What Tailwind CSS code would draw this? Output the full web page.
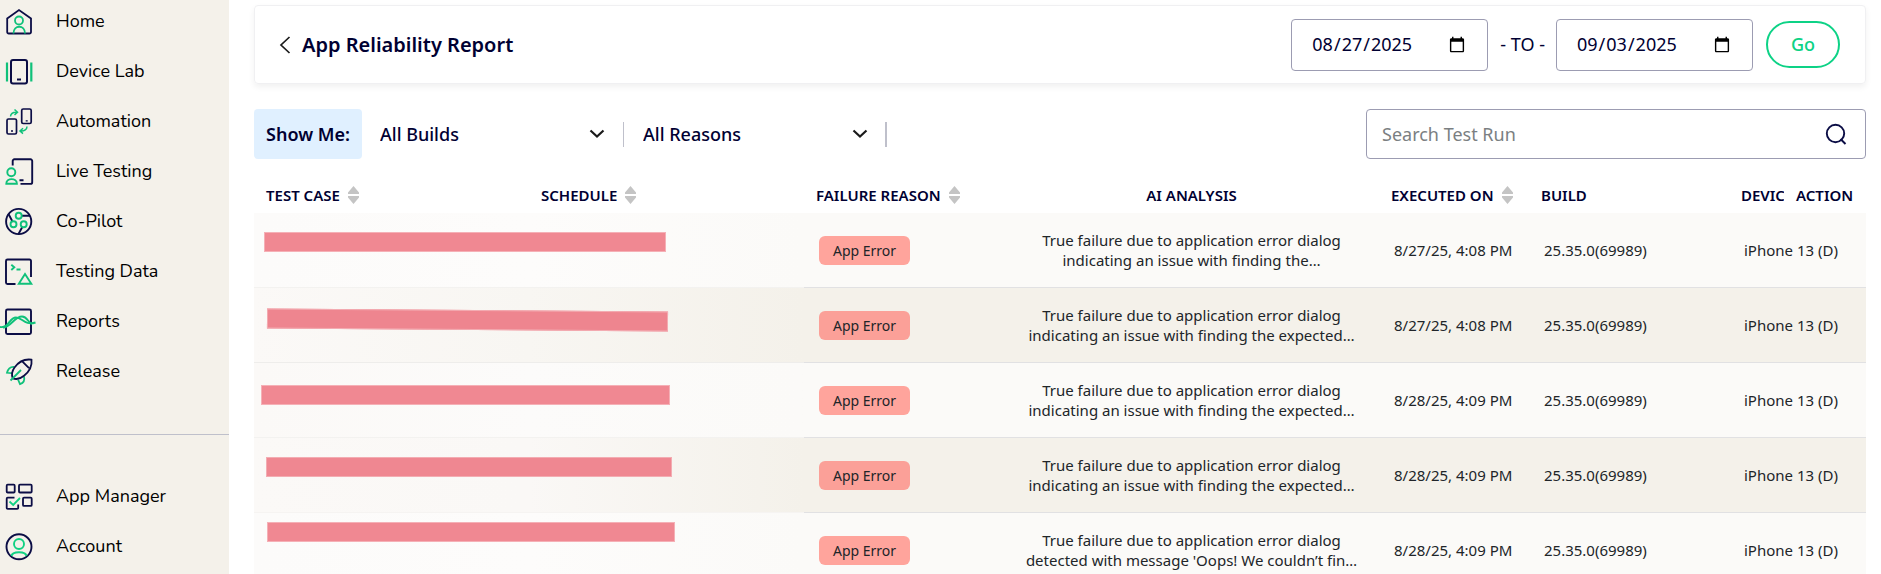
<!DOCTYPE html>
<html lang="en">
<head>
<meta charset="utf-8">
<title>App Reliability Report</title>
<script src="https://cdn.jsdelivr.net/npm/@tailwindcss/browser@4"></script>
</head>
<body class="flex h-screen overflow-hidden bg-white font-['Noto_Sans',sans-serif] text-[#000032]">

<svg class="hidden">
  <symbol id="sort" viewBox="0 0 11 18"><path d="M5.500 0 11 6.500V8H0V6.500Z M5.500 18 11 11.500V10H0v1.500Z" fill="#c4c4c4"/></symbol>
  <symbol id="chev" viewBox="0 0 16 10"><path d="M1.500 1.500 8 7.500 14.500 1.500" fill="none" stroke="#1a1a1a" stroke-width="2.200"/></symbol>
</svg>

<nav aria-label="Main" class="w-[229px] shrink-0 bg-[#f4f1ea] font-['Nunito','Lato',sans-serif] text-[18px] text-black">
  <ul class="flex flex-col gap-[6px] leading-[42px] [&_a]:flex [&_a]:h-11 [&_a]:items-start [&_a]:gap-5 [&_svg]:mt-1 [&_svg]:size-9">
    <li><a href="#">
      <svg viewBox="0 0 36 36" fill="none" stroke-width="1.800" stroke="#0b0d45"><path d="M7.200 14.500 19 6l12 8.500V28a1.500 1.500 0 0 1-1.500 1.500H8.700A1.500 1.500 0 0 1 7.200 28Z"/><g stroke="#10c17a"><circle cx="19" cy="16.500" r="4"/><path d="M13.500 29.500c0-9 11.500-9 11.500 0"/></g></svg>Home</a></li>
    <li><a href="#">
      <svg viewBox="0 0 36 36" fill="none" stroke-width="2" stroke="#0b0d45"><rect x="11" y="6" width="16" height="23.500" rx="2"/><path d="M17 25.500h4"/><path d="M7 8.500v19M31.300 8.500v19" stroke="#10c17a" stroke-width="2.200"/></svg>Device Lab</a></li>
    <li><a href="#">
      <svg viewBox="0 0 36 36" fill="none" stroke-width="1.700" stroke="#0b0d45"><rect x="7" y="15" width="9.500" height="15" rx="1.500"/><rect x="21.700" y="5" width="9.500" height="14.500" rx="1.500"/><path d="M11 27h2M25.700 16.800h2" stroke-width="1.300"/><g stroke="#10c17a" stroke-width="1.500"><path d="M10.500 12.500c.3-3 2.500-4.500 6.500-4.200M14.500 5.500l3 2.800-3 2.700M27 22.500c0 3-2.500 4.800-6.500 4.500M23 24.200l-3 2.800 3 2.600"/></g></svg>Automation</a></li>
    <li><a href="#">
      <svg viewBox="0 0 36 36" fill="none" stroke-width="1.900" stroke="#0b0d45"><path d="M12.700 11.500V7a1.700 1.700 0 0 1 1.700-1.700H30.500A1.700 1.700 0 0 1 32.200 7v21.200a1.700 1.700 0 0 1-1.700 1.700H20.500M19.500 26.300h4"/><g stroke="#10c17a"><circle cx="11.300" cy="18.300" r="4"/><path d="M6.300 29.800c0-6.200 10.600-6.200 10.600 0Z"/></g></svg>Live Testing</a></li>
    <li><a href="#">
      <svg viewBox="0 0 36 36" fill="none" stroke-width="1.900" stroke="#0b0d45"><circle cx="18.700" cy="17.500" r="12.600"/><path d="M22 11.700h8M8.500 10l3.700 7M22.300 23 18.500 30"/><g stroke="#10c17a"><circle cx="18.700" cy="11.700" r="3"/><circle cx="13.500" cy="20.200" r="3"/><circle cx="23.700" cy="20.200" r="3"/></g></svg>Co-Pilot</a></li>
    <li><a href="#">
      <svg viewBox="0 0 36 36" fill="none" stroke-width="1.900" stroke="#0b0d45"><path d="M31 23V7a1.500 1.500 0 0 0-1.500-1.500H7.500A1.500 1.500 0 0 0 6 7v21.500A1.500 1.500 0 0 0 7.500 30H15.500"/><g stroke="#10c17a"><path d="M25 20 31.300 29.800H18.800Z"/><path d="m11.300 10.700 3 2.600-3 2.700M16.500 15.500h4"/></g></svg>Testing Data</a></li>
    <li><a href="#">
      <svg viewBox="0 0 36 36" fill="none" stroke-width="1.900" stroke="#0b0d45"><rect x="6" y="5.500" width="25" height="24.500" rx="1.500"/><g stroke="#10c17a"><path d="M0 23c9 1.500 9-9.500 16-9.500 6 0 9 8.500 19.500 5"/><path d="M3 23.500c8 0 11-11 19-11 5.500 0 6 6.500 10 7.500"/></g></svg>Reports</a></li>
    <li><a href="#">
      <svg viewBox="0 0 36 36" fill="none" stroke-width="1.800" stroke="#0b0d45"><g stroke="#10c17a"><path d="M14 12.800C9.500 12.500 7.800 15.500 7 18.800l5 .4M24 22.500c1 4-.5 6.500-4 7.700l-2-4.700"/></g><path d="M31.500 5.700C25 4.800 18.500 8 14.500 13.500c-2.500 3.500-3 7.500-1.800 10.800 3 1.200 7.500.7 11.300-2.500 5.500-4.300 8.200-10.300 7.500-16.100ZM22.500 7.700l6.500 6.500"/><path d="M10.500 26.500 21 16" stroke="#10c17a"/></svg>Release</a></li>
  </ul>
  <hr class="my-10 border-t border-[#bfc0cb]">
  <ul class="flex flex-col gap-[6px] leading-[42px] [&_a]:flex [&_a]:h-11 [&_a]:items-start [&_a]:gap-5 [&_svg]:mt-1 [&_svg]:size-9">
    <li><a href="#">
      <svg viewBox="0 0 36 36" fill="none" stroke-width="1.800" stroke="#0b0d45"><rect x="6.700" y="5.700" width="8" height="7.800" rx="1"/><rect x="19" y="5.700" width="12.700" height="7.800" rx="1"/><rect x="23" y="18.700" width="8.700" height="8.200" rx="1"/><path d="M14.500 18.700H7.700a1 1 0 0 0-1 1v9.200a1 1 0 0 0 1 1h9.500a1 1 0 0 0 1-1V25.500"/><path d="m9.500 22.500 3.700 3.500L20 19" stroke="#10d183"/></svg>App Manager</a></li>
    <li><a href="#">
      <svg viewBox="0 0 36 36" fill="none" stroke-width="1.900" stroke="#0b0d45"><circle cx="19" cy="17.800" r="12.500"/><g stroke="#10d183"><circle cx="19" cy="15" r="5"/><path d="M11.500 27c.7-5 14.300-5 15 0"/></g></svg>Account</a></li>
  </ul>
</nav>

<main class="min-w-0 flex-1 pt-[5px] pr-[15px] pl-[25px]">
  <header class="flex h-[79px] items-center rounded border border-[#f0f0f2] pr-[25px] pl-6 shadow-[0_3px_6px_rgba(0,0,0,0.06)]">
    <button aria-label="Back" class="mr-[11px]"><svg class="h-[18px] w-[12px]" viewBox="0 0 12 18" fill="none" stroke="#1a1a1a" stroke-width="1.700"><path d="M10.500 1 2 9l8.500 8"/></svg></button>
    <h1 class="text-[20px] font-semibold">App Reliability Report</h1>
    <div class="ml-auto flex items-center text-[18px]">
      <input type="date" aria-label="From date" value="2025-08-27" class="h-[52px] w-[197px] rounded border border-[#9c9cb2] px-[19px]">
      <span class="mr-[11px] ml-3">- TO -</span>
      <input type="date" aria-label="To date" value="2025-09-03" class="h-[52px] w-[197px] rounded border border-[#9c9cb2] px-[19px]">
      <button class="ml-[13px] h-[47px] w-[74px] rounded-full border-2 border-[#0dd286] font-medium text-[#0dd286]">Go</button>
    </div>
  </header>

  <div class="mt-[25px] flex h-[50px] items-center text-[18px]">
    <span class="flex h-full w-[108px] items-center justify-center rounded bg-[#e0f0ff] font-semibold">Show Me:</span>
    <div class="ml-[18px] grid w-[225px] items-center font-medium">
      <select aria-label="Builds" class="col-start-1 row-start-1 w-full appearance-none"><option>All Builds</option></select>
      <svg class="pointer-events-none col-start-1 row-start-1 h-[10px] w-4 justify-self-end"><use href="#chev"/></svg>
    </div>
    <span class="ml-[18px] h-[25px] w-px bg-[#bfc0cb]"></span>
    <div class="ml-[19px] grid w-[225px] items-center font-medium">
      <select aria-label="Reasons" class="col-start-1 row-start-1 w-full appearance-none"><option>All Reasons</option></select>
      <svg class="pointer-events-none col-start-1 row-start-1 h-[10px] w-4 justify-self-end"><use href="#chev"/></svg>
    </div>
    <span class="ml-[17px] h-[25px] w-0.5 bg-[#bfc0cb]"></span>
    <label class="ml-auto flex h-full w-[500px] items-center rounded-sm border border-[#9c9cb2] pr-[18px] pl-[15px]">
      <input type="search" aria-label="Search Test Run" placeholder="Search Test Run" class="min-w-0 flex-1 outline-none placeholder:text-[#7b7f82]">
      <svg class="size-[22px]" viewBox="0 0 22 22" fill="none" stroke="#0b0d45" stroke-width="1.900"><circle cx="10.500" cy="10.500" r="8.700"/><path d="m15.500 16 5 5"/></svg>
    </label>
  </div>

  <table class="mt-[18px] w-full table-fixed border-separate border-spacing-0 text-[15px] leading-5 text-[#212529]">
    <colgroup><col><col><col class="w-[200px]"><col class="w-[375px]"><col class="w-[150px]"><col class="w-[200px]"><col class="w-[55px]"><col class="w-[82px]"></colgroup>
    <thead class="text-left text-[#000032]">
      <tr class="h-9 [&>th]:overflow-hidden [&>th]:p-0 [&>th]:pl-3 [&>th]:font-semibold [&>th]:whitespace-nowrap">
        <th><span class="flex items-center gap-2">TEST CASE <svg class="h-[18px] w-[11px]"><use href="#sort"/></svg></span></th>
        <th><span class="flex items-center gap-2">SCHEDULE <svg class="h-[18px] w-[11px]"><use href="#sort"/></svg></span></th>
        <th><span class="flex items-center gap-2">FAILURE REASON <svg class="h-[18px] w-[11px]"><use href="#sort"/></svg></span></th>
        <th class="pr-3! text-center">AI ANALYSIS</th>
        <th><span class="flex items-center gap-2">EXECUTED ON <svg class="h-[18px] w-[11px]"><use href="#sort"/></svg></span></th>
        <th>BUILD</th>
        <th><span class="block overflow-hidden">DEVICE</span></th>
        <th>ACTION</th>
      </tr>
    </thead>
    <tbody class="[&>tr]:h-[75px] [&>tr:nth-child(odd)]:bg-[#fbfaf8] [&>tr:nth-child(even)]:bg-[#f4f1ea] [&_td]:border-b [&_td]:border-[#e1e1e3] [&_td]:py-0 [&_td]:pl-[15px] [&_td]:whitespace-nowrap">
      <tr>
        <td colspan="2" class="relative border-[#f3f2f0]! bg-linear-to-r from-[#fcfbfa] via-[#fdfcfb] to-[#fbfaf8]"><span class="absolute top-[19px] left-[10px] h-5 w-[402px] border border-[#f5b0b6] bg-[#f08892]"></span></td>
        <td><span class="inline-block rounded-md bg-[#ffa49c] px-[14px] py-1 text-[14px] leading-[21px]">App Error</span></td>
        <td class="px-3!"><p class="text-center">True failure due to application error dialog<br>indicating an issue with finding the…</p></td>
        <td>8/27/25, 4:08 PM</td><td>25.35.0(69989)</td><td>iPhone 13 (D)</td><td></td>
      </tr>
      <tr>
        <td colspan="2" class="relative border-[#eeedeb]! bg-linear-to-r from-[#fbf9f7] via-[#f8f6f2] to-[#f4f1ea]"><span class="absolute top-[22px] left-[13px] h-5 w-[401px] rotate-[0.4deg] border border-[#f3acb2] bg-[#ee858f]"></span></td>
        <td><span class="inline-block rounded-md bg-[#fba098] px-[14px] py-1 text-[14px] leading-[21px]">App Error</span></td>
        <td class="px-3!"><p class="text-center">True failure due to application error dialog<br>indicating an issue with finding the expected…</p></td>
        <td>8/27/25, 4:08 PM</td><td>25.35.0(69989)</td><td>iPhone 13 (D)</td><td></td>
      </tr>
      <tr>
        <td colspan="2" class="relative border-[#f3f2f0]! bg-linear-to-r from-[#fbf9f7] via-[#fcfbfa] to-[#fbfaf8]"><span class="absolute top-[22px] left-[7px] h-5 w-[409px] border border-[#f5b0b6] bg-[#f08892]"></span></td>
        <td><span class="inline-block rounded-md bg-[#ffa49c] px-[14px] py-1 text-[14px] leading-[21px]">App Error</span></td>
        <td class="px-3!"><p class="text-center">True failure due to application error dialog<br>indicating an issue with finding the expected…</p></td>
        <td>8/28/25, 4:09 PM</td><td>25.35.0(69989)</td><td>iPhone 13 (D)</td><td></td>
      </tr>
      <tr>
        <td colspan="2" class="relative border-[#f6f4f2]! bg-linear-to-r from-[#fbf9f7] via-[#faf8f6] to-[#f4f1ea]"><span class="absolute top-[19px] left-[12px] h-5 w-[406px] border border-[#f3acb2] bg-[#ef8791]"></span></td>
        <td><span class="inline-block rounded-md bg-[#fba098] px-[14px] py-1 text-[14px] leading-[21px]">App Error</span></td>
        <td class="px-3!"><p class="text-center">True failure due to application error dialog<br>indicating an issue with finding the expected…</p></td>
        <td>8/28/25, 4:09 PM</td><td>25.35.0(69989)</td><td>iPhone 13 (D)</td><td></td>
      </tr>
      <tr>
        <td colspan="2" class="relative bg-linear-to-r from-[#fcfbfa] via-[#fdfcfb] to-[#fbfaf8]"><span class="absolute top-[9px] left-[13px] h-5 w-[408px] border border-[#f5b0b6] bg-[#f08892]"></span></td>
        <td><span class="inline-block rounded-md bg-[#ffa49c] px-[14px] py-1 text-[14px] leading-[21px]">App Error</span></td>
        <td class="px-3!"><p class="text-center">True failure due to application error dialog<br>detected with message 'Oops! We couldn’t fin…</p></td>
        <td>8/28/25, 4:09 PM</td><td>25.35.0(69989)</td><td>iPhone 13 (D)</td><td></td>
      </tr>
    </tbody>
  </table>
</main>
</body>
</html>
